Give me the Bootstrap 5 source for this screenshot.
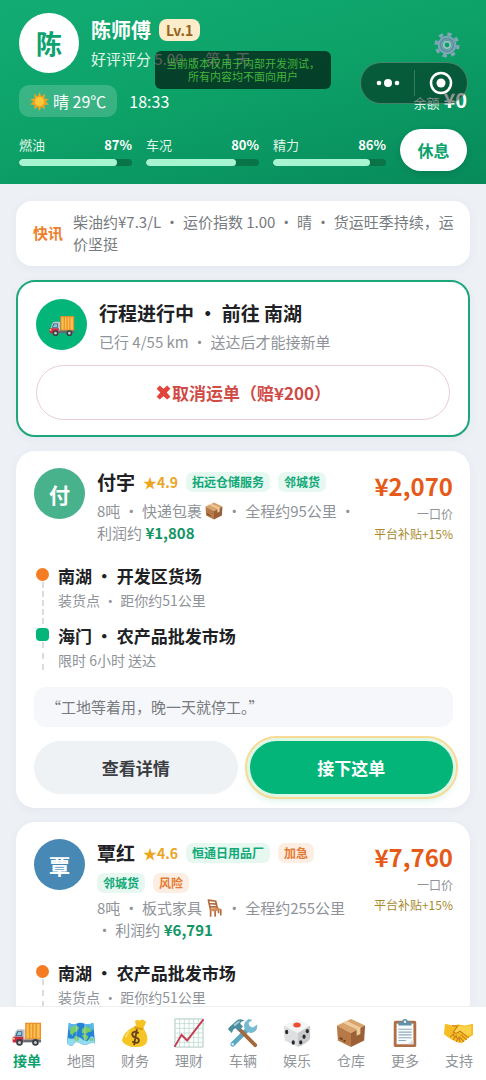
<!DOCTYPE html>
<html lang="zh-CN">
<head>
<meta charset="utf-8">
<meta name="viewport" content="width=device-width, initial-scale=1">
<title>接单</title>
<link rel="stylesheet" href="https://cdn.jsdelivr.net/npm/bootstrap@5.3.0/dist/css/bootstrap.min.css">
<style>
:root{--green:#04b579;--ink:#202124;--muted-ink:#8f9399}
body{font-family:"Noto Sans CJK SC",sans-serif;font-size:15px;line-height:22px;color:var(--ink);background:#edf0f5}
button{font-family:inherit}
.t12{font-size:12px;line-height:20px}
.t13{font-size:13px;line-height:20px}
.t14{font-size:14px;line-height:20px}
.t15{font-size:15px;line-height:22px}
.t17{font-size:17px;line-height:24px}
.t19{font-size:19px;line-height:28px}
.t20{font-size:20px;line-height:28px}
.soft{color:var(--muted-ink)}
.ico{display:inline-block;flex:none;width:1em;height:1em}
.goods{font-size:18px;vertical-align:-3px}
/* header */
.hero{background:linear-gradient(165deg,#12ac74 0%,#0da268 45%,#078a5b 100%);color:#fff;padding:13px 19px}
.me{width:60px;height:60px;background:#fff;color:#0ba26d;font-size:26px}
.who{margin-left:12px}
.level{background:#fcecca;color:#95631c;font-size:14px;line-height:22px;border-radius:8px;padding:0 7px}
.weather{background:rgba(255,255,255,.18);border-radius:10px;padding:5px 11px;font-size:16px;line-height:22px}
.weather .ico{font-size:19px}
.clock{font-size:16px}
.pale{color:#e0f5ea}
.gear{font-size:26px;color:#7fa6b4;top:32px;right:26px}
.devnote{top:51px;left:50%;width:176px;margin-left:-88px;background:rgba(0,0,0,.6);border-radius:6px;color:#42b43c;font-size:11px;line-height:13px;padding:6px 0;z-index:2}
.capsule{top:62px;right:18px;width:108px;height:42px;border-radius:21px;background:rgba(0,0,0,.42);border:1px solid rgba(255,255,255,.25);z-index:2}
.capsule button{background:none;border:0;padding:0;color:#fff}
.capsule button+button{border-left:1px solid rgba(255,255,255,.2)}
.money{font-size:20px}
.meters{column-gap:14px}
.meter{--bs-progress-height:7px;--bs-progress-bg:#087448;--bs-progress-bar-bg:#a6f4d0;--bs-progress-border-radius:4px}
.meter .progress-bar{border-radius:4px}
.rest{background:#fff;color:#0ba26d;width:67px;height:42px;border-radius:21px;border:0;font-size:16px;box-shadow:0 2px 6px rgba(0,60,40,.2)}
/* feed */
.feed{padding:17px 16px 0;overflow-y:auto;scrollbar-width:none;min-height:0}
.feed::-webkit-scrollbar{display:none}
.panel{background:#fff;border-radius:19px;box-shadow:0 2px 10px rgba(60,80,120,.05);margin-bottom:14px}
.flash{border-radius:16px;padding:10px 14px 11px 17px;color:#777b80;column-gap:10px}
.flash strong{color:#ee7f2d;width:30px;flex:none}
.trip{border:2px solid #1ba779;padding:17px 18px 15px}
.disc{width:51px;height:51px;flex:none;color:#fff;font-size:21px}
.disc .ico{font-size:26px}
.disc-trip,.act-take{background:var(--green)}
.cancel{height:55px;border:1px solid #e9cdd2;border-radius:28px;background:#fff;color:#d04a46;font-size:17px;margin-top:12px}
.order{padding:17px 17px 14px 18px}
.star{color:#eca51f}
.chip{font-size:12px;line-height:20px;font-weight:600;padding:0 6px;border-radius:7px}
.chip-g{background:#e7f8f1;color:#10a877}
.chip-o{background:#fdeee3;color:#e57a35}
.tags{column-gap:8px;row-gap:10px;padding-top:4px}
.tags .line{line-height:20px}
.price{font-size:24px;line-height:36px;color:#e65a17}
.gain{color:#129565}
.bonus{color:#a8892d}
.stops{margin:20px 0 0;padding:0 0 0 24px;list-style:none}
.stop{position:relative;padding-bottom:14px}
.stop:last-child{padding-bottom:0}
.stop::before{content:"";position:absolute;z-index:1;left:-22px;top:4px;width:13px;height:13px;border-radius:50%;background:#f57c22}
.stop.end::before{border-radius:4px;background:var(--green)}
.stop::after{content:"";position:absolute;left:-16px;top:18px;bottom:0;border-left:2px dashed #dcdcdc}
.stop span{display:block;margin-top:2px}
.say{background:#f6f7fa;border-radius:12px;padding:9px 12px;color:#777b80;margin-top:17px}
.acts{column-gap:12px;margin-top:14px}
.act{height:53px;border:0;border-radius:27px;font-size:17px;font-weight:700}
.act-view{background:#eff2f5;color:#3b3e42}
.act-take{color:#fff;outline:2px solid #f8d995;outline-offset:3px;box-shadow:0 0 0 3px #dcf9e6,0 4px 10px rgba(4,181,121,.3)}
.tabs{background:#fff;border-top:1px solid #eceef0;padding:11px 0 10px;font-size:14px;line-height:20px}
.tabs a{flex:1 1 0;color:#909499;text-decoration:none;text-align:center}
.tabs .ico{display:block;font-size:30px;margin:0 auto 2px}
.tabs a.active{color:#0ba26d;font-weight:700}
</style>
</head>
<body class="vh-100 d-flex flex-column overflow-hidden">
<svg class="d-none" aria-hidden="true">
<symbol id="truck" viewBox="0 0 32 32"><path fill="#e9912d" d="M14 5h17v18H14z"/><path fill="#fbc04f" d="M15.500 6.500h2.500v15h-2.500zM19.500 6.500h2v15h-2zM23 6.500h2v15h-2zM26.500 6.500h3v15h-3z"/><path fill="#bdc6ce" d="M4 14q1-2 3-2h6.500v13H2v-5z"/><path fill="#3c637b" d="M5.500 14H11v5.500H3.500z"/><path fill="#8cc7e3" d="M6.500 15H10v3.500H5z"/><path fill="#ca2941" d="M1 20h11v6H1q-1-2 0-6z"/><path fill="#666c72" d="M12 23h19v3H12z"/><path fill="#f8d26d" d="M1 21h2v2H1z"/><circle cx="8" cy="26" r="3.500" fill="#3b3e43"/><circle cx="8" cy="26" r="1.600" fill="#c4cbd0"/><circle cx="25" cy="26" r="3.500" fill="#3b3e43"/><circle cx="25" cy="26" r="1.600" fill="#c4cbd0"/></symbol>
<symbol id="map" viewBox="0 0 32 32"><path fill="#2583d6" d="M3 5q4 3 8 1t9 0 9-1l2 22q-5-1-8 1t-8-1-7 1-7-1z"/><path fill="#8fdcf0" d="M2 21q4 2 8 0t8 2 7-1 5 0l1 5q-5-1-8 1t-8-1-7 1-7-1z"/><path fill="#58b8ea" d="M3 5q4 3 8 1l-1 4-4 1-3 3zM20 6q5 1 9-1l1 8-4-1-2-3-4 1z"/><path fill="#79cc6c" d="M5 10l6-2 3 2-2 4-4 2-1 3-3-3zM9 19l4 1 1 2-3 4-2-3zM17 12l4-3 4 1 3 4-4 1-3 2-4-1zM17 18l4-1 3 3-3 5-2-3zM25 22l4-1v3l-3 1z"/><path d="M11 6v21M20 6v21" stroke="#fff" stroke-width=".8" opacity=".4"/></symbol>
<symbol id="bag" viewBox="0 0 32 32"><path fill="#f6c525" d="M17 8l-1-5q2-2 5 0 3-3 5 0l2 1-3 7q5 7 4 13 0 7-12 7T2 24Q3 15 17 8z"/><path fill="#d49b19" d="M16 9l9 2-1 2-9-2z"/><path fill="#fce16b" d="M5 20q2-5 6-7-3 4-4 8z"/><path fill="none" stroke="#67431a" stroke-width="2" d="M20 16q-6-3-7 1 0 3 4 4t3 4q-2 3-7 0M18 12l-3 17"/></symbol>
<symbol id="chart" viewBox="0 0 32 32"><path fill="#fdfefe" stroke="#a6c9bd" d="M1 1h30v30H1z"/><path fill="none" stroke="#b9d8ce" stroke-width=".8" d="M6 1v30M11 1v30M16 1v30M21 1v30M26 1v30M1 6h30M1 11h30M1 16h30M1 21h30M1 26h30"/><path fill="none" stroke="#c63951" stroke-width="2" stroke-linecap="round" d="M1 30l7-12 6 6L31 2"/></symbol>
<symbol id="tools" viewBox="0 0 32 32"><path fill="none" stroke="#5ba6c3" stroke-width="5" stroke-linecap="round" d="M5 28L22 11"/><path fill="#77b9d2" d="M18 12q-3-7 4-11l4 1-4 3 1 4 4 1 4-3q1 7-6 9-4 0-7-4z"/><circle cx="5" cy="28" r="1.300" fill="#d6edf3"/><path fill="none" stroke="#a4683d" stroke-width="4" stroke-linecap="round" d="M13 13l16 16"/><path fill="#4c8c9f" d="M1 10l9-8q4-2 8 1-4 0-5 3l3 3-5 5-3-3-2 1-2 4-4-4z"/><path fill="#9fcbd6" d="M6 7l5-4 2 1-6 5z"/></symbol>
<symbol id="die" viewBox="0 0 32 32"><path fill="#f5f5f5" d="M2 8L16 1l14 7-13 8z"/><path fill="#dedfe0" d="M2 8l15 8v15L3 24q-1-6-1-16z"/><path fill="#c8cacc" d="M17 16l13-8v14q-2 4-13 9z"/><ellipse cx="16" cy="7.500" rx="4" ry="2.700" fill="#ee4d34"/><g fill="#292c30"><ellipse cx="5" cy="15" rx="1.700" ry="2.400"/><ellipse cx="12" cy="26" rx="1.700" ry="2.400"/><ellipse cx="27" cy="14" rx="1.700" ry="2.300"/><ellipse cx="20" cy="26" rx="1.700" ry="2.300"/><ellipse cx="23.500" cy="20" rx="1.700" ry="2.300"/></g></symbol>
<symbol id="box" viewBox="0 0 32 32"><path fill="#d9a36c" d="M1 8l15-7 15 7-15 8z"/><path fill="#b77a47" d="M1 8l15 8v15L2 24z"/><path fill="#9b6036" d="M31 8l-15 8v15l14-7z"/><path fill="#efcca0" d="M7 5l4-2 15 7v7l-4 2v-7z"/><path d="M4 21l3 2m1 1l2 1" stroke="#68401f" stroke-width="2"/></symbol>
<symbol id="clip" viewBox="0 0 32 32"><rect x="4" y="3" width="24" height="28" rx="2" fill="#b06e47"/><path fill="#f8fafb" d="M7 6h18v22H7z"/><path fill="#d6e1e8" d="M19 28l6-5v5z"/><path d="M9 12h14M9 15h14M9 18h14M9 21h14M9 24h8" stroke="#8dabc0" stroke-width="1.200"/><path fill="#5d93a9" d="M9 4h4q0-3 3-3t3 3h4v4H9z"/><circle cx="16" cy="4" r="1.300" fill="#e6f1f5"/></symbol>
<symbol id="shake" viewBox="0 0 32 32"><path fill="#f7bd25" d="M1 6l8 2 6-1 8 1 8-2v12l-5 3-7 6-4-1-7-3-6-4-2-2z"/><path fill="#fbd24a" d="M15 8l8 1 6-1v9l-4 2-7-5-4 2-4-1z"/><path fill="none" stroke="#c17b18" stroke-width="1.100" stroke-linecap="round" d="M9 8l5 1M15 8l-5 7q3 3 7-1l9 7M18 18l6 5M16 20l5 5M7 20l3-3 1 3M10 23l3-4 1 3M13 25l3-4 1 4"/></symbol>
<symbol id="sun" viewBox="0 0 32 32"><path fill="#f4a51f" d="M16 0l3 8 6-5-1 8 8 1-6 4 6 5-8 1 1 7-6-4-3 7-3-7-6 4 1-7-8-1 6-5-6-4 8-1-1-8 6 5z"/><circle cx="16" cy="16" r="8.500" fill="#ffca37" stroke="#e58e20"/></symbol>
<symbol id="gear" viewBox="0 0 32 32"><g fill="none" stroke="currentColor"><circle cx="16" cy="16" r="8.500" stroke-width="6"/><circle cx="16" cy="16" r="13.500" stroke-width="4" stroke-dasharray="5.300 5.303"/></g><circle cx="16" cy="16" r="8" fill="none" stroke="#5d8fa4" stroke-width="2"/><circle cx="16" cy="16" r="4" fill="none" stroke="#a6c3cd" stroke-width="2"/></symbol>
<symbol id="chair" viewBox="0 0 32 32"><g fill="none" stroke="#b46a3d" stroke-width="3" stroke-linecap="round"><path d="M6 2l4 18v10M6 2l13 2 3 13M8 8l12 1M9 14l12 0M28 19v9M18 21v9M24 17v7"/></g><path fill="#d38b54" d="M9 17l14-1 6 3-13 3-6-2z"/></symbol>
<symbol id="cross" viewBox="0 0 32 32"><path fill="#e1453b" d="M9 3l7 6 7-6 6 6-7 7 7 8-6 5-7-6-7 6-6-5 7-8-7-7z"/></symbol>
</svg>

<header class="hero position-relative flex-shrink-0">
  <div class="d-flex align-items-center">
    <div class="me rounded-circle d-flex align-items-center justify-content-center fw-bold">陈</div>
    <div class="who">
      <div class="d-flex align-items-center gap-2"><h1 class="fw-bold t20 mb-0">陈师傅</h1><span class="level fw-semibold">Lv.1</span></div>
      <div class="pale t15 mt-1">好评评分 5.00 · 第 1 天</div>
    </div>
  </div>
  <button class="gear btn p-0 border-0 lh-1 position-absolute d-flex" aria-label="设置"><svg class="ico"><use href="#gear"/></svg></button>
  <div class="devnote position-absolute text-center">当前版本仅用于内部开发测试，<br>所有内容均不面向用户</div>
  <div class="capsule position-absolute d-flex align-items-center">
    <button class="w-50" aria-label="菜单"><svg width="24" height="26" viewBox="0 0 24 26" fill="currentColor"><circle cx="3" cy="13" r="2.300"/><circle cx="12" cy="13" r="4"/><circle cx="21" cy="13" r="2.300"/></svg></button>
    <button class="w-50" aria-label="关闭"><svg width="26" height="26" viewBox="0 0 26 26" fill="currentColor"><circle cx="13" cy="13" r="10" fill="none" stroke="currentColor" stroke-width="2.500"/><circle cx="13" cy="13" r="4.500"/></svg></button>
  </div>
  <div class="d-flex align-items-center mt-2 pt-1">
    <div class="weather d-flex align-items-center gap-1"><svg class="ico"><use href="#sun"/></svg><span>晴 29℃</span></div>
    <div class="clock ms-2 ps-1">18:33</div>
    <div class="ms-auto d-flex align-items-baseline gap-1"><span class="t13 pale">余额</span><strong class="money">¥0</strong></div>
  </div>
  <div class="meters d-flex align-items-center mt-2 pt-1">
    <div class="flex-fill"><div class="d-flex justify-content-between t13"><span class="pale">燃油</span><span class="fw-semibold">87%</span></div><div class="progress meter mt-1"><div class="progress-bar" style="width:87%"></div></div></div>
    <div class="flex-fill"><div class="d-flex justify-content-between t13"><span class="pale">车况</span><span class="fw-semibold">80%</span></div><div class="progress meter mt-1"><div class="progress-bar" style="width:80%"></div></div></div>
    <div class="flex-fill"><div class="d-flex justify-content-between t13"><span class="pale">精力</span><span class="fw-semibold">86%</span></div><div class="progress meter mt-1"><div class="progress-bar" style="width:86%"></div></div></div>
    <button class="rest fw-bold">休息</button>
  </div>
</header>

<main class="feed flex-grow-1">
  <section class="panel flash d-flex align-items-center"><strong class="text-nowrap">快讯</strong><span>柴油约¥7.3/L · 运价指数 1.00 · 晴 · 货运旺季持续，运价坚挺</span></section>

  <section class="panel trip">
    <div class="d-flex align-items-start gap-2">
      <div class="disc disc-trip rounded-circle d-flex align-items-center justify-content-center me-1"><svg class="ico"><use href="#truck"/></svg></div>
      <div><h2 class="t19 fw-bold mb-0">行程进行中 · 前往 南湖</h2><div class="soft t15 mt-1">已行 4/55 km · 送达后才能接新单</div></div>
    </div>
    <button class="cancel w-100 fw-bold d-flex align-items-center justify-content-center"><svg class="ico"><use href="#cross"/></svg>取消运单（赔¥200）</button>
  </section>

  <article class="panel order">
    <div class="d-flex">
      <div class="disc rounded-circle d-flex align-items-center justify-content-center fw-bold" style="background:#48b28c">付</div>
      <div class="flex-fill ms-2 ps-1">
        <div class="tags d-flex flex-wrap align-items-center"><h2 class="t19 line fw-bold mb-0">付宇</h2><span class="t14 line star fw-semibold">★4.9</span><span class="chip chip-g">拓远仓储服务</span><span class="chip chip-g">邻城货</span></div>
        <div class="soft t15 mt-2">8吨 · 快递包裹 <svg class="ico goods"><use href="#box"/></svg> · 全程约95公里 · 利润约 <strong class="gain">¥1,808</strong></div>
      </div>
      <div class="text-end text-nowrap ms-3"><div class="price fw-bold">¥2,070</div><div class="t12 soft">一口价</div><div class="t12 bonus">平台补贴+15%</div></div>
    </div>
    <ul class="stops">
      <li class="stop"><strong class="t17 d-block">南湖 · 开发区货场</strong><span class="t14 soft">装货点 · 距你约51公里</span></li>
      <li class="stop end"><strong class="t17 d-block">海门 · 农产品批发市场</strong><span class="t14 soft">限时 6小时 送达</span></li>
    </ul>
    <div class="say">“工地等着用，晚一天就停工。”</div>
    <div class="acts d-flex"><button class="act act-view w-50">查看详情</button><button class="act act-take w-50">接下这单</button></div>
  </article>

  <article class="panel order">
    <div class="d-flex">
      <div class="disc rounded-circle d-flex align-items-center justify-content-center fw-bold" style="background:#4788b5">覃</div>
      <div class="flex-fill ms-2 ps-1">
        <div class="tags d-flex flex-wrap align-items-center"><h2 class="t19 line fw-bold mb-0">覃红</h2><span class="t14 line star fw-semibold">★4.6</span><span class="chip chip-g">恒通日用品厂</span><span class="chip chip-o">加急</span><span class="chip chip-g">邻城货</span><span class="chip chip-o">风险</span></div>
        <div class="soft t15 mt-1">8吨 · 板式家具 <svg class="ico goods"><use href="#chair"/></svg> · 全程约255公里 · 利润约 <strong class="gain">¥6,791</strong></div>
      </div>
      <div class="text-end text-nowrap ms-3"><div class="price fw-bold">¥7,760</div><div class="t12 soft">一口价</div><div class="t12 bonus">平台补贴+15%</div></div>
    </div>
    <ul class="stops">
      <li class="stop"><strong class="t17 d-block">南湖 · 农产品批发市场</strong><span class="t14 soft">装货点 · 距你约51公里</span></li>
    </ul>
  </article>
</main>

<nav class="tabs d-flex flex-shrink-0">
  <a href="#" class="active"><svg class="ico"><use href="#truck"/></svg>接单</a>
  <a href="#"><svg class="ico"><use href="#map"/></svg>地图</a>
  <a href="#"><svg class="ico"><use href="#bag"/></svg>财务</a>
  <a href="#"><svg class="ico"><use href="#chart"/></svg>理财</a>
  <a href="#"><svg class="ico"><use href="#tools"/></svg>车辆</a>
  <a href="#"><svg class="ico"><use href="#die"/></svg>娱乐</a>
  <a href="#"><svg class="ico"><use href="#box"/></svg>仓库</a>
  <a href="#"><svg class="ico"><use href="#clip"/></svg>更多</a>
  <a href="#"><svg class="ico"><use href="#shake"/></svg>支持</a>
</nav>
<script src="https://cdn.jsdelivr.net/npm/bootstrap@5.3.0/dist/js/bootstrap.bundle.min.js"></script>
</body>
</html>
